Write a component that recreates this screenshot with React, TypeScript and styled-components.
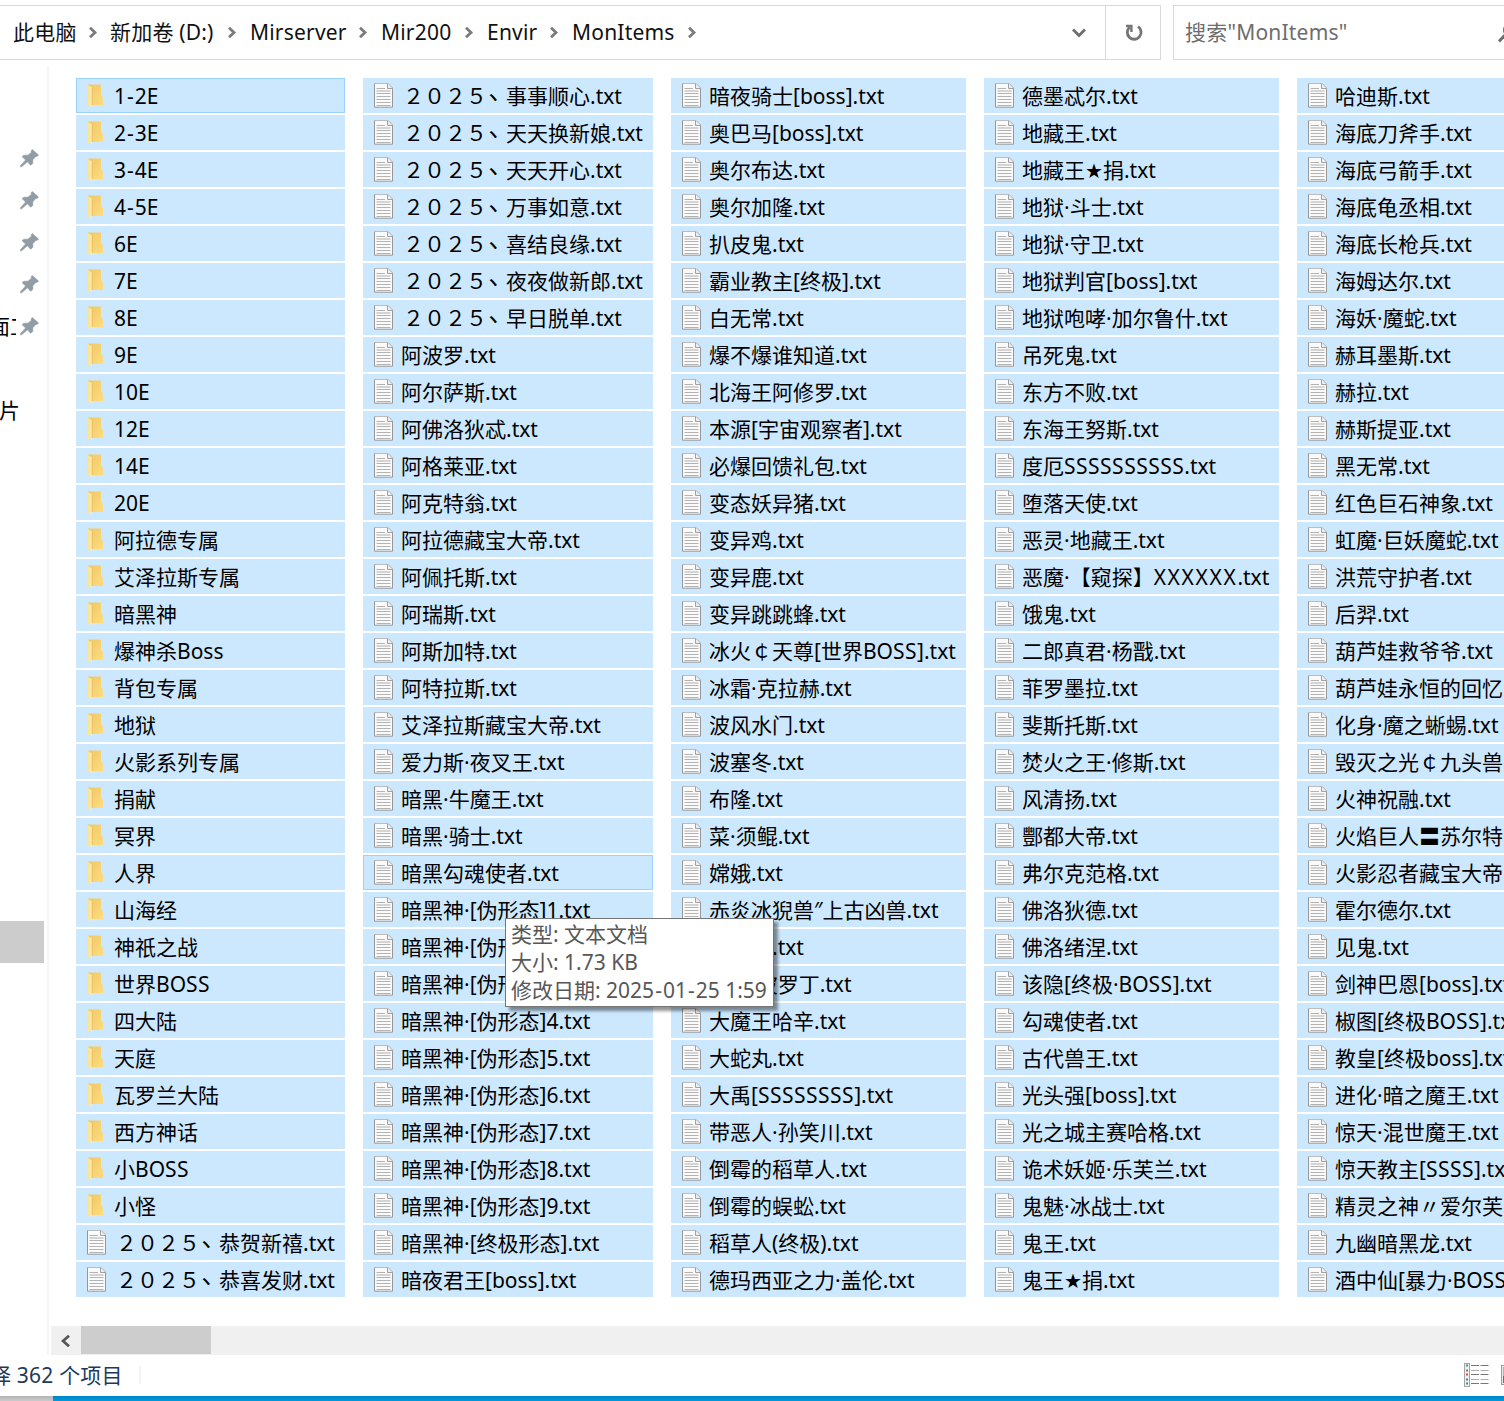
import React from "react";
import styled, { createGlobalStyle } from "styled-components";

const Global = createGlobalStyle`
  * { box-sizing: border-box; }
  body { margin: 0; background: #fff; overflow: hidden; }
`;

const Window = styled.div`
  width: 1504px;
  height: 1401px;
  overflow: hidden;
  display: flex;
  flex-direction: column;
  background: #fff;
  color: #000;
  font-family: "Noto Sans", "Noto Sans CJK SC", sans-serif;
  font-size: 21px;
  line-height: 28px;
  white-space: pre;
  text-spacing-trim: space-all;
`;

const TopBar = styled.header`
  display: flex;
  gap: 12px;
  height: 60px;
  padding-top: 5px;
  flex: none;
`;

const AddressBox = styled.div`
  width: 1161px;
  height: 55px;
  display: flex;
  align-items: center;
  border: 1px solid #d9d9d9;
  border-left: 0;
  flex: none;
`;

const Crumbs = styled.nav`
  flex: 1;
  display: flex;
  align-items: center;
  padding-left: 13px;
  color: #111;
`;

const Crumb = styled.span<{ $w: number }>`
  width: ${(p) => p.$w}px;
  margin-bottom: 2px;
  letter-spacing: 0.2px;
  flex: none;
`;

const Chevron = styled.svg<{ $after: number }>`
  width: 9px;
  height: 13px;
  margin: 0 ${(p) => p.$after}px 0 0;
  flex: none;
`;

const DropArea = styled.div`
  width: 53px;
  display: flex;
  justify-content: center;
  align-items: center;
`;

const Refresh = styled.div`
  width: 55px;
  height: 100%;
  display: flex;
  justify-content: center;
  align-items: center;
  padding-left: 2px;
  border-left: 1px solid #d9d9d9;
`;

const SearchBox = styled.div`
  width: 400px;
  height: 55px;
  display: flex;
  align-items: center;
  gap: 148px;
  padding-left: 11px;
  border: 1px solid #d9d9d9;
  color: #6d6d6d;
  flex: none;
`;

const SearchText = styled.span`
  width: 165px;
  margin-bottom: 2px;
  letter-spacing: 0.2px;
  flex: none;
`;

const Main = styled.main`
  display: flex;
  height: 1295px;
  flex: none;
`;

const Sidebar = styled.aside`
  width: 47px;
  padding-top: 77px;
  flex: none;
`;

const SideRow = styled.div<{ $gap?: number; $selected?: boolean }>`
  width: 44px;
  height: 42px;
  margin-top: ${(p) => p.$gap ?? 0}px;
  display: flex;
  align-items: center;
  justify-content: space-between;
  padding-right: 5px;
  background: ${(p) => (p.$selected ? "#cccccc" : "transparent")};
`;

const SideLabel = styled.span<{ $shift: number; $clip: number }>`
  width: ${(p) => p.$clip}px;
  overflow: hidden;
  text-indent: ${(p) => p.$shift}px;
`;

const Splitter = styled.div`
  width: 2px;
  margin-top: 7px;
  background: #f5f5f5;
  flex: none;
`;

const ListPane = styled.section`
  position: relative;
  width: 1455px;
  display: flex;
  flex-direction: column;
  justify-content: space-between;
  overflow: hidden;
`;

const Columns = styled.div`
  display: flex;
  gap: 18px;
  padding: 18px 0 0 27px;
`;

const Column = styled.div<{ $w: number }>`
  width: ${(p) => p.$w}px;
  display: flex;
  flex-direction: column;
  gap: 2px;
  flex: none;
`;

const Item = styled.div<{ $focus?: boolean }>`
  height: 35px;
  display: flex;
  align-items: center;
  padding-left: 11px;
  background: #cce8ff;
  box-shadow: ${(p) => (p.$focus ? "inset 0 0 0 1px #99d1ff" : "none")};
`;

const IconSlot = styled.span`
  width: 27px;
  height: 25px;
  margin-bottom: 1px;
  flex: none;
  display: block;
  line-height: 0;
`;

const Name = styled.span`
  height: 28px;
`;

const Star = styled.span`
  font-family: "DejaVu Sans", sans-serif;
  font-size: 20px;
  line-height: 1;
`;

const Tracked = styled.span<{ $by: number }>`
  letter-spacing: ${(p) => p.$by}px;
`;

const Hyphen = styled.span`
  padding: 0 1px;
`;

const Year = styled.span`
  display: inline-block;
  width: 84px;
  text-indent: 2px;
`;

const Tick = styled.span`
  display: inline-block;
  width: 21px;
  font-size: 14px;
  font-weight: 700;
  line-height: 1;
  vertical-align: 2px;
  padding-left: 1px;
`;

const Tooltip = styled.div`
  position: absolute;
  left: 456px;
  top: 858px;
  width: 269px;
  height: 89px;
  padding: 1px 0 0 5px;
  background: #fff;
  border: 1px solid #767676;
  box-shadow: 4px 4px 3px rgba(0, 0, 0, 0.42);
  color: #575757;
`;

const ScrollBar = styled.div`
  height: 29px;
  margin-left: 2px;
  display: flex;
  background: #f0f0f0;
`;

const ScrollButton = styled.div`
  width: 30px;
  display: flex;
  align-items: center;
  justify-content: center;
`;

const Thumb = styled.div`
  width: 130px;
  height: 28px;
  background: #cdcdcd;
`;

const Status = styled.footer`
  height: 41px;
  display: flex;
  align-items: center;
  color: #1e395b;
  padding-bottom: 2px;
  flex: none;
`;

const Count = styled.span`
  width: 139px;
  text-indent: -10px;
  letter-spacing: 0.2px;
  overflow: hidden;
  flex: none;
`;

const StatusLine = styled.div`
  width: 2px;
  height: 18px;
  background: #f3f3f3;
  flex: none;
`;

const ViewIcons = styled.div`
  display: flex;
  gap: 12px;
  align-items: center;
  margin-left: 1323px;
  height: 26px;
  flex: none;
`;

const Taskbar = styled.div`
  height: 5px;
  display: flex;
  background: linear-gradient(#0084c8, #0099dd);
  flex: none;
`;

const TaskCorner = styled.div`
  width: 53px;
  background: linear-gradient(#b4b4b6, #cacacc);
`;

const FolderIcon = () => (
  <svg width="17" height="25" viewBox="0 0 17 25">
    <defs>
      <linearGradient id="fb" x1="0" y1="0" x2="1" y2="1">
        <stop offset="0" stopColor="#efc765" />
        <stop offset="1" stopColor="#ffdc7e" />
      </linearGradient>
      <linearGradient id="ff" x1="0" y1="0" x2="1" y2="0">
        <stop offset="0" stopColor="#ffe08c" />
        <stop offset="1" stopColor="#ffeaa9" />
      </linearGradient>
    </defs>
    <path d="M1 1.5H14V12L16 14.5V22H4Z" fill="url(#fb)" />
    <path d="M0 1.5L5 4.5V24.5L0 22Z" fill="url(#ff)" />
    <path d="M5.2 4.5V22" stroke="#e3bd63" strokeWidth="0.8" />
  </svg>
);

const FileIcon = () => (
  <svg width="20" height="25" viewBox="0 0 20 25">
    <path d="M0.5 0.5H14L18.5 5V24.2H0.5Z" fill="#fafafa" stroke="#979797" />
    <path d="M0.5 0.5H14" stroke="#bdbdbd" />
    <path d="M13.5 0.5V5.5H18.5" fill="#eee" stroke="#a0a0a0" />
    <path d="M2.5 5.5H11M2.5 10.5H16.5M2.5 13.5H16.5M2.5 16.5H16.5M2.5 19.5H16.5M2.5 22.5H16.5" stroke="#b3b3b3" />
    <path d="M2.5 8H16.5" stroke="#d4d4d4" strokeWidth="2" />
  </svg>
);

const PinIcon = () => (
  <svg width="19" height="19" viewBox="0 0 19 19">
    <path
      d="M12.3 0.6L18.5 6L17.4 7.2L15.8 7.4L12.8 10.8L12.8 14.4L10.6 16.2L7.4 12.8L1.6 17.8H0.4V16.8L5.6 11L2 7.6L4 6.2L8 6.2L11.4 3.2L11.2 1.6Z"
      fill="#919ca4"
      stroke="#919ca4"
      strokeWidth="0.6"
    />
  </svg>
);

const DetailsIcon = () => (
  <svg width="25" height="24" viewBox="0 0 25 24">
    <rect x="0.5" y="0.5" width="5" height="23" fill="#eef0f2" stroke="#a3a3a3" />
    {[2.5, 7.5, 11.5, 16.5, 20.5].map((y, i) => (
      <g key={y}>
        <rect x="2" y={y - 1} width="2" height="2" fill={["#4b87b5", "#a8705a", "#d4513b", "#527ea0", "#4c8b84"][i]} />
        <path d={`M7 ${y}H15M16.5 ${y}H24.5`} stroke={i % 2 ? "#adadad" : "#777"} />
      </g>
    ))}
  </svg>
);

const LargeIconsIcon = () => (
  <svg width="25" height="20" viewBox="0 0 25 20">
    <rect x="0.5" y="0.5" width="24" height="19" fill="#e8e8e8" stroke="#9a9a9a" />
    <rect x="2" y="2" width="21" height="9" fill="#8fbbe0" />
    <rect x="2" y="11" width="21" height="7" fill="#54768a" />
  </svg>
);

const Arrow = ({ after }: { after: number }) => (
  <Chevron viewBox="0 0 9 13" $after={after}>
    <path d="M1 1.8L6 6.5L1 11.2" fill="none" stroke="#7b7b7b" strokeWidth="2.8" />
  </Chevron>
);

const crumbs: [string, number, number][] = [
  ["此电脑", 76, 12],
  ["新加卷 (D:)", 118, 13],
  ["Mirserver", 109, 13],
  ["Mir200", 84, 13],
  ["Envir", 63, 13],
  ["MonItems", 116, 0],
];

const columns: { w: number; items: string[] }[] = [
  {
    w: 269,
    items: `1-2E|2-3E|3-4E|4-5E|6E|7E|8E|9E|10E|12E|14E|20E|阿拉德专属|艾泽拉斯专属|暗黑神|爆神杀Boss|背包专属|地狱|火影系列专属|捐献|冥界|人界|山海经|神祇之战|世界BOSS|四大陆|天庭|瓦罗兰大陆|西方神话|小BOSS|小怪|２０２５ヽ恭贺新禧.txt|２０２５ヽ恭喜发财.txt`.split("|"),
  },
  {
    w: 290,
    items: `２０２５ヽ事事顺心|２０２５ヽ天天换新娘|２０２５ヽ天天开心|２０２５ヽ万事如意|２０２５ヽ喜结良缘|２０２５ヽ夜夜做新郎|２０２５ヽ早日脱单|阿波罗|阿尔萨斯|阿佛洛狄忒|阿格莱亚|阿克特翁|阿拉德藏宝大帝|阿佩托斯|阿瑞斯|阿斯加特|阿特拉斯|艾泽拉斯藏宝大帝|爱力斯·夜叉王|暗黑·牛魔王|暗黑·骑士|暗黑勾魂使者|暗黑神·[伪形态]1|暗黑神·[伪形态]2|暗黑神·[伪形态]3|暗黑神·[伪形态]4|暗黑神·[伪形态]5|暗黑神·[伪形态]6|暗黑神·[伪形态]7|暗黑神·[伪形态]8|暗黑神·[伪形态]9|暗黑神·[终极形态]|暗夜君王[boss]`.split("|").map((n) => n + ".txt"),
  },
  {
    w: 295,
    items: `暗夜骑士[boss]|奥巴马[boss]|奥尔布达|奥尔加隆|扒皮鬼|霸业教主[终极]|白无常|爆不爆谁知道|北海王阿修罗|本源[宇宙观察者]|必爆回馈礼包|变态妖异猪|变异鸡|变异鹿|变异跳跳蜂|冰火￠天尊[世界BOSS]|冰霜·克拉赫|波风水门|波塞冬|布隆|菜·须鲲|嫦娥|赤炎冰猊兽″上古凶兽|大巴赫|大地·波罗丁|大魔王哈辛|大蛇丸|大禹[SSSSSSSS]|带恶人·孙笑川|倒霉的稻草人|倒霉的蜈蚣|稻草人(终极)|德玛西亚之力·盖伦`.split("|").map((n) => n + ".txt"),
  },
  {
    w: 295,
    items: `德墨忒尔|地藏王|地藏王★捐|地狱·斗士|地狱·守卫|地狱判官[boss]|地狱咆哮·加尔鲁什|吊死鬼|东方不败|东海王努斯|度厄SSSSSSSSSS|堕落天使|恶灵·地藏王|恶魔·【窥探】XXXXXX|饿鬼|二郎真君·杨戬|菲罗墨拉|斐斯托斯|焚火之王·修斯|风清扬|酆都大帝|弗尔克范格|佛洛狄德|佛洛绪涅|该隐[终极·BOSS]|勾魂使者|古代兽王|光头强[boss]|光之城主赛哈格|诡术妖姬·乐芙兰|鬼魅·冰战士|鬼王|鬼王★捐`.split("|").map((n) => n + ".txt"),
  },
  {
    w: 295,
    items: `哈迪斯|海底刀斧手|海底弓箭手|海底龟丞相|海底长枪兵|海姆达尔|海妖·魔蛇|赫耳墨斯|赫拉|赫斯提亚|黑无常|红色巨石神象|虹魔·巨妖魔蛇|洪荒守护者|后羿|葫芦娃救爷爷|葫芦娃永恒的回忆|化身·魔之蜥蜴|毁灭之光￠九头兽|火神祝融|火焰巨人〓苏尔特|火影忍者藏宝大帝|霍尔德尔|见鬼|剑神巴恩[boss]|椒图[终极BOSS]|教皇[终极boss]|进化·暗之魔王|惊天·混世魔王|惊天教主[SSSS]|精灵之神〃爱尔芙|九幽暗黑龙|酒中仙[暴力·BOSS]`.split("|").map((n) => n + ".txt"),
  },
];

const focused = new Set(["1-2E", "暗黑勾魂使者.txt"]);

const Label = ({ text }: { text: string }) => (
  <>
    {text.split(/(★|X+|S+|-|ヽ|２０２５)/).map((part, i) => {
      if (part === "★") return <Star key={i}>{part}</Star>;
      if (part === "-") return <Hyphen key={i}>{part}</Hyphen>;
      if (part === "ヽ") return <Tick key={i}>{part}</Tick>;
      if (part === "２０２５") return <Year key={i}>{part}</Year>;
      if (part[0] === "X") return <Tracked key={i} $by={1.65}>{part}</Tracked>;
      if (part[0] === "S") return <Tracked key={i} $by={0.5}>{part}</Tracked>;
      return part;
    })}
  </>
);

export default function App() {
  return (
    <Window>
      <Global />
      <TopBar>
        <AddressBox>
          <Crumbs>
            {crumbs.map(([label, w, after]) => (
              <React.Fragment key={label}>
                <Crumb $w={w}>{label}</Crumb>
                <Arrow after={after} />
              </React.Fragment>
            ))}
          </Crumbs>
          <DropArea>
            <svg width="14" height="10" viewBox="0 0 14 10">
              <path d="M1 1.5L7 7.5L13 1.5" fill="none" stroke="#6e6e6e" strokeWidth="2.8" />
            </svg>
          </DropArea>
          <Refresh>
            <svg width="18" height="18" viewBox="0 0 18 18">
              <path d="M13 2.6A6.9 6.9 0 1 1 4.6 3.2" fill="none" stroke="#757575" strokeWidth="2.8" />
              <path d="M1 2H6.4V8" fill="none" stroke="#757575" strokeWidth="2.4" />
            </svg>
          </Refresh>
        </AddressBox>
        <SearchBox>
          <SearchText>搜索"MonItems"</SearchText>
          <svg width="20" height="20" viewBox="0 0 20 20">
            <circle cx="12" cy="7" r="6" fill="none" stroke="#6e6e6e" strokeWidth="2" />
            <path d="M8 11L1 18.5" stroke="#6e6e6e" strokeWidth="3" />
          </svg>
        </SearchBox>
      </TopBar>
      <Main>
        <Sidebar>
          {["", "", "", "", "面工"].map((label, i) => (
            <SideRow key={i}>
              <SideLabel $shift={-11} $clip={16}>{label}</SideLabel>
              <PinIcon />
            </SideRow>
          ))}
          <SideRow $gap={42}>
            <SideLabel $shift={-1} $clip={39}>片</SideLabel>
          </SideRow>
          <SideRow $gap={490} $selected />
        </Sidebar>
        <Splitter />
        <ListPane>
          <Columns>
            {columns.map((col, c) => (
              <Column key={c} $w={col.w}>
                {col.items.map((name) => (
                  <Item key={name} $focus={focused.has(name)}>
                    <IconSlot>{name.endsWith(".txt") ? <FileIcon /> : <FolderIcon />}</IconSlot>
                    <Name>
                      <Label text={name} />
                    </Name>
                  </Item>
                ))}
              </Column>
            ))}
          </Columns>
          <Tooltip>
            <Label text={"类型: 文本文档\n大小: 1.73 KB\n修改日期: 2025-01-25 1:59"} />
          </Tooltip>
          <ScrollBar>
            <ScrollButton>
              <svg width="10" height="12" viewBox="0 0 10 12">
                <path d="M8 0.8L2 6L8 11.2" fill="none" stroke="#555" strokeWidth="2.8" />
              </svg>
            </ScrollButton>
            <Thumb />
          </ScrollBar>
        </ListPane>
      </Main>
      <Status>
        <Count>择 362 个项目</Count>
        <StatusLine />
        <ViewIcons>
          <DetailsIcon />
          <LargeIconsIcon />
        </ViewIcons>
      </Status>
      <Taskbar>
        <TaskCorner />
      </Taskbar>
    </Window>
  );
}
